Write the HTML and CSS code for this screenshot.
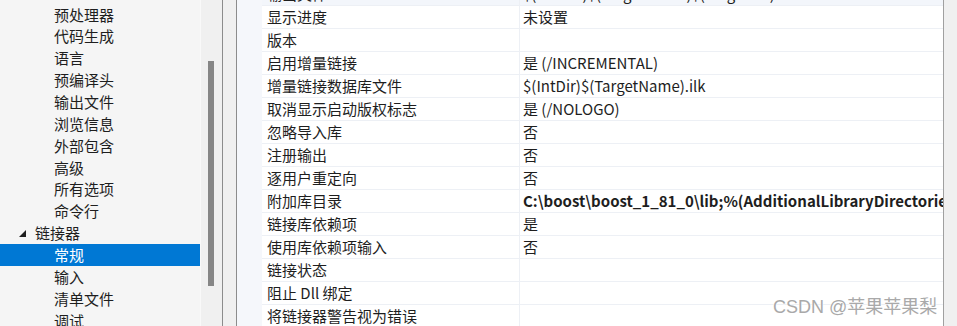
FILE: index.html
```html
<!DOCTYPE html>
<html lang="zh-CN">
<head>
<meta charset="utf-8">
<title>链接器 - 常规</title>
<link rel="stylesheet" href="styles.css">
</head>
<body>
<div class="window">
  <div class="tree">
    <div class="tree-item child">预处理器</div>
    <div class="tree-item child">代码生成</div>
    <div class="tree-item child">语言</div>
    <div class="tree-item child">预编译头</div>
    <div class="tree-item child">输出文件</div>
    <div class="tree-item child">浏览信息</div>
    <div class="tree-item child">外部包含</div>
    <div class="tree-item child">高级</div>
    <div class="tree-item child">所有选项</div>
    <div class="tree-item child">命令行</div>
    <div class="tree-item parent"><svg class="expander" width="8" height="8" viewBox="0 0 8 8"><polygon points="7,0 7,7 0,7" fill="#1e1e1e"/></svg>链接器</div>
    <div class="tree-item child selected">常规</div>
    <div class="tree-item child">输入</div>
    <div class="tree-item child">清单文件</div>
    <div class="tree-item child">调试</div>
  </div>
  <div class="vscroll"><div class="thumb"></div></div>
  <div class="splitter"></div>
  <div class="grid">
    <div class="gutter"></div>
    <div class="rows">
      <div class="row top"><div class="label">输出文件</div><div class="value">$(OutDir)$(TargetName)$(TargetExt)</div></div>
      <div class="row"><div class="label">显示进度</div><div class="value">未设置</div></div>
      <div class="row"><div class="label">版本</div><div class="value"></div></div>
      <div class="row"><div class="label">启用增量链接</div><div class="value">是 (/INCREMENTAL)</div></div>
      <div class="row"><div class="label">增量链接数据库文件</div><div class="value">$(IntDir)$(TargetName).ilk</div></div>
      <div class="row"><div class="label">取消显示启动版权标志</div><div class="value">是 (/NOLOGO)</div></div>
      <div class="row"><div class="label">忽略导入库</div><div class="value">否</div></div>
      <div class="row"><div class="label">注册输出</div><div class="value">否</div></div>
      <div class="row"><div class="label">逐用户重定向</div><div class="value">否</div></div>
      <div class="row"><div class="label">附加库目录</div><div class="value bold">C:\boost\boost_1_81_0\lib;%(AdditionalLibraryDirectories)</div></div>
      <div class="row"><div class="label">链接库依赖项</div><div class="value">是</div></div>
      <div class="row"><div class="label">使用库依赖项输入</div><div class="value">否</div></div>
      <div class="row"><div class="label">链接状态</div><div class="value"></div></div>
      <div class="row"><div class="label">阻止 Dll 绑定</div><div class="value"></div></div>
      <div class="row"><div class="label">将链接器警告视为错误</div><div class="value"></div></div>
    </div>
    <div class="watermark">CSDN @苹果苹果梨</div>
  </div>
  <div class="rightpad"></div>
</div>
</body>
</html>
```

FILE: styles.css
```css
html, body {
  margin: 0;
  padding: 0;
}
body {
  width: 957px;
  height: 326px;
  overflow: hidden;
  background: #f0f0f0;
  font-family: "Noto Sans CJK SC", "Microsoft YaHei", sans-serif;
  font-size: 15px;
  color: #1e1e1e;
}
.window {
  display: flex;
  height: 326px;
  overflow: hidden;
}
.tree {
  width: 200px;
  flex: none;
  background: #f5f5f5;
  padding-top: 3.5px;
  box-sizing: border-box;
  overflow: hidden;
}
.tree-item {
  height: 21.86px;
  line-height: 21.86px;
  white-space: nowrap;
  display: flex;
  align-items: center;
}
.tree-item.child {
  padding-left: 54px;
}
.tree-item.parent {
  padding-left: 19px;
}
.expander {
  margin-right: 8px;
  margin-top: 2px;
}
.tree-item.selected {
  background: #0078d4;
  color: #ffffff;
}
.vscroll {
  width: 22px;
  flex: none;
  background: #f0f0f0;
  border-left: 1px solid #f9f9f9;
  box-sizing: border-box;
  position: relative;
}
.thumb {
  position: absolute;
  left: 7px;
  top: 61px;
  width: 6px;
  height: 225px;
  background: #868686;
}
.splitter {
  width: 15px;
  flex: none;
  box-sizing: border-box;
  border-left: 1px solid #8c8c8c;
  border-right: 1px solid #8c8c8c;
  background: #f0f0f0;
}
.grid {
  width: 707px;
  flex: none;
  display: flex;
  position: relative;
  border-right: 1px solid #a0a0a0;
  box-sizing: border-box;
  background: #ffffff;
  overflow: hidden;
}
.gutter {
  width: 25px;
  flex: none;
  background: #f5f7fb;
}
.rows {
  flex: 1;
  margin-top: -17px;
}
.row {
  display: flex;
  height: 23px;
  box-sizing: border-box;
  border-bottom: 1px solid #edf0f5;
  line-height: 22px;
  white-space: nowrap;
}
.row.top {
  background: #f3f6fb;
}
.label {
  width: 258px;
  flex: none;
  padding-left: 5px;
  box-sizing: border-box;
  border-right: 1px solid #edf0f5;
  overflow: hidden;
}
.value {
  flex: 1;
  padding-left: 3px;
  overflow: hidden;
}
.value.bold {
  font-weight: bold;
}
.watermark {
  position: absolute;
  left: 536px;
  top: 292px;
  font-family: "Liberation Sans", "Noto Sans CJK SC", sans-serif;
  font-size: 18px;
  color: #a9a9a9;
  text-shadow: 0 0 2px #ffffff, 0 0 2px #ffffff;
  white-space: nowrap;
}
.rightpad {
  flex: 1;
  background: #f0f0f0;
}
```
